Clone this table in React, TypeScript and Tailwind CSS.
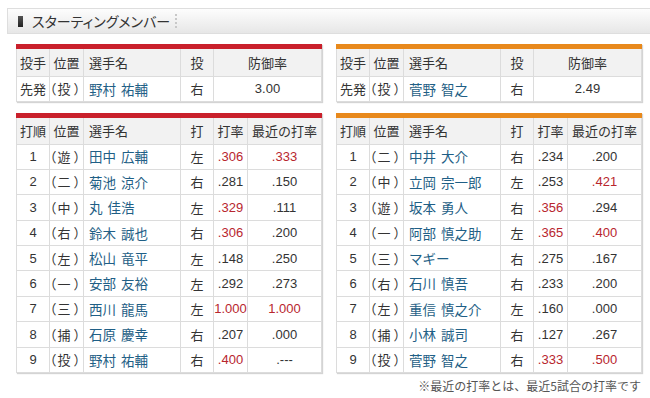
import React from "react";

type Batter = { o: number; pos: string; last: string; first: string; hand: string; avg: string; avgRed?: boolean; rec: string; recRed?: boolean };

const carp: Batter[] = [
  { o: 1, pos: "遊", last: "田中", first: "広輔", hand: "左", avg: ".306", avgRed: true, rec: ".333", recRed: true },
  { o: 2, pos: "二", last: "菊池", first: "涼介", hand: "右", avg: ".281", rec: ".150" },
  { o: 3, pos: "中", last: "丸", first: "佳浩", hand: "左", avg: ".329", avgRed: true, rec: ".111" },
  { o: 4, pos: "右", last: "鈴木", first: "誠也", hand: "右", avg: ".306", avgRed: true, rec: ".200" },
  { o: 5, pos: "左", last: "松山", first: "竜平", hand: "左", avg: ".148", rec: ".250" },
  { o: 6, pos: "一", last: "安部", first: "友裕", hand: "左", avg: ".292", rec: ".273" },
  { o: 7, pos: "三", last: "西川", first: "龍馬", hand: "左", avg: "1.000", avgRed: true, rec: "1.000", recRed: true },
  { o: 8, pos: "捕", last: "石原", first: "慶幸", hand: "右", avg: ".207", rec: ".000" },
  { o: 9, pos: "投", last: "野村", first: "祐輔", hand: "右", avg: ".400", avgRed: true, rec: ".---" },
];

const giants: Batter[] = [
  { o: 1, pos: "二", last: "中井", first: "大介", hand: "右", avg: ".234", rec: ".200" },
  { o: 2, pos: "中", last: "立岡", first: "宗一郎", hand: "左", avg: ".253", rec: ".421", recRed: true },
  { o: 3, pos: "遊", last: "坂本", first: "勇人", hand: "右", avg: ".356", avgRed: true, rec: ".294" },
  { o: 4, pos: "一", last: "阿部", first: "慎之助", hand: "左", avg: ".365", avgRed: true, rec: ".400", recRed: true },
  { o: 5, pos: "三", last: "マギー", first: "", hand: "右", avg: ".275", rec: ".167" },
  { o: 6, pos: "右", last: "石川", first: "慎吾", hand: "右", avg: ".233", rec: ".200" },
  { o: 7, pos: "左", last: "重信", first: "慎之介", hand: "左", avg: ".160", rec: ".000" },
  { o: 8, pos: "捕", last: "小林", first: "誠司", hand: "右", avg: ".127", rec: ".267" },
  { o: 9, pos: "投", last: "菅野", first: "智之", hand: "右", avg: ".333", avgRed: true, rec: ".500", recRed: true },
];

const JP = { fontFamily: '"Noto Sans CJK JP", "Liberation Sans", sans-serif' };
const NUM = { fontFamily: '"Liberation Sans", Arial, sans-serif' };

const th = "border border-[#dcdcdc] bg-[#f2f2f2] text-[#333] font-normal text-[13px] p-0";
const td = "border border-[#dcdcdc] bg-white text-[#333] text-[13px] p-0";
const posCls = "text-left whitespace-nowrap [text-spacing-trim:trim-start]";

function Pos({ p }: { p: string }) {
  return (
    <>
      （<span className="ml-[1px]">{p}</span><span className="ml-[3px]">）</span>
    </>
  );
}

function Name({ last, first }: { last: string; first: string }) {
  return (
    <span className="text-[#1f5f86] text-[13.5px]">
      {last}
      {first && <span className="ml-[5px]">{first}</span>}
    </span>
  );
}

function PitcherTable({ color, last, first, era }: { color: string; last: string; first: string; era: string }) {
  return (
    <div className="w-[306px] shadow-[1px_1px_1px_#d4d4d4]">
      <div className={`h-[5px] ${color}`} />
      <table className="w-full table-fixed border-collapse" style={JP}>
        <colgroup>
          <col className="w-[33px]" />
          <col className="w-[34px]" />
          <col className="w-[97px]" />
          <col className="w-[33px]" />
          <col />
        </colgroup>
        <thead>
          <tr className="h-[27px]">
            <th className={`${th} border-t-0 text-center`}>投手</th>
            <th className={`${th} border-t-0 text-center`}>位置</th>
            <th className={`${th} border-t-0 text-left pl-[5px]`}>選手名</th>
            <th className={`${th} border-t-0 text-center`}>投</th>
            <th className={`${th} border-t-0 text-center`}>防御率</th>
          </tr>
        </thead>
        <tbody>
          <tr className="h-[25.5px]">
            <td className={`${td} text-center`}>先発</td>
            <td className={`${td} ${posCls}`}><Pos p="投" /></td>
            <td className={`${td} text-left pl-[5px]`}><Name last={last} first={first} /></td>
            <td className={`${td} text-center`}>右</td>
            <td className={`${td} text-center text-[12.5px]`} style={NUM}>{era}</td>
          </tr>
        </tbody>
      </table>
    </div>
  );
}

function BattingTable({ color, rows }: { color: string; rows: Batter[] }) {
  return (
    <div className="w-[306px] shadow-[1px_1px_1px_#d4d4d4]">
      <div className={`h-[5px] ${color}`} />
      <table className="w-full table-fixed border-collapse" style={JP}>
        <colgroup>
          <col className="w-[33px]" />
          <col className="w-[34px]" />
          <col className="w-[97px]" />
          <col className="w-[33px]" />
          <col className="w-[34px]" />
          <col />
        </colgroup>
        <thead>
          <tr className="h-[26.5px]">
            <th className={`${th} border-t-0 text-center`}>打順</th>
            <th className={`${th} border-t-0 text-center`}>位置</th>
            <th className={`${th} border-t-0 text-left pl-[5px]`}>選手名</th>
            <th className={`${th} border-t-0 text-center`}>打</th>
            <th className={`${th} border-t-0 text-center`}>打率</th>
            <th className={`${th} border-t-0 text-center`}>最近の打率</th>
          </tr>
        </thead>
        <tbody>
          {rows.map((r) => (
            <tr key={r.o} className="h-[25.4px]">
              <td className={`${td} text-center text-[12.5px]`} style={NUM}>{r.o}</td>
              <td className={`${td} ${posCls}`}><Pos p={r.pos} /></td>
              <td className={`${td} text-left pl-[5px]`}><Name last={r.last} first={r.first} /></td>
              <td className={`${td} text-center`}>{r.hand}</td>
              <td className={`${td} text-center text-[12.5px] ${r.avgRed ? "text-[#b8262e]" : ""}`} style={NUM}>{r.avg}</td>
              <td className={`${td} text-center text-[12.5px] ${r.recRed ? "text-[#b8262e]" : ""}`} style={NUM}>{r.rec}</td>
            </tr>
          ))}
        </tbody>
      </table>
    </div>
  );
}

export default function App() {
  return (
    <div className="w-[650px] h-[398px] bg-white overflow-hidden pt-[8px] pl-[7px]" style={JP}>
      <div className="h-[26px] border border-r-0 border-[#dedede] bg-gradient-to-b from-[#fdfdfd] to-[#e7e7e7] flex items-center">
        <div className="ml-[10px] w-[5px] h-[11px] bg-gradient-to-b from-[#555] to-[#222]" />
        <span className="ml-[9px] text-[14px] leading-none text-[#333] [font-feature-settings:'palt']">スターティングメンバー</span>
        <div className="ml-[5px] flex flex-col gap-[2px]">
          <span className="w-[2px] h-[2px] bg-[#c8c8c8]" />
          <span className="w-[2px] h-[2px] bg-[#c8c8c8]" />
          <span className="w-[2px] h-[2px] bg-[#c8c8c8]" />
          <span className="w-[2px] h-[2px] bg-[#c8c8c8]" />
        </div>
      </div>
      <div className="ml-[9px] mt-[10px] flex gap-[14px]">
        <div className="flex flex-col gap-[10.5px]">
          <PitcherTable color="bg-[#c9202b]" last="野村" first="祐輔" era="3.00" />
          <BattingTable color="bg-[#c9202b]" rows={carp} />
        </div>
        <div className="flex flex-col">
          <div className="flex flex-col gap-[10.5px]">
            <PitcherTable color="bg-[#e8891c]" last="菅野" first="智之" era="2.49" />
            <BattingTable color="bg-[#e8891c]" rows={giants} />
          </div>
          <div className="text-right text-[12px] leading-[18px] text-[#555] mt-[4px] pr-[1px]">※最近の打率とは、最近5試合の打率です</div>
        </div>
      </div>
    </div>
  );
}
